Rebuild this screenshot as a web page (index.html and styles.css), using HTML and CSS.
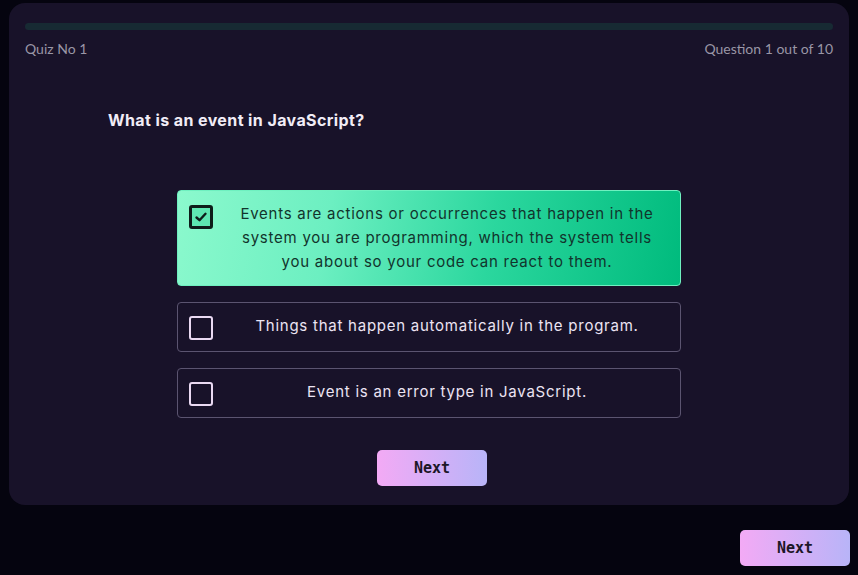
FILE: index.html
```html
<!DOCTYPE html>
<html lang="en">
<head>
<meta charset="utf-8">
<title>Quiz</title>
<link rel="stylesheet" href="styles.css">
</head>
<body>
<div class="page">
  <main class="card">
    <div class="progress"><div class="progress-fill"></div></div>
    <div class="meta">
      <span>Quiz No 1</span>
      <span>Question 1 out of 10</span>
    </div>
    <h1 class="question">What is an event in JavaScript?</h1>
    <div class="options">
      <div class="option selected">
        <span class="checkbox">
          <svg viewBox="0 0 16 16" width="16" height="16"><path d="M3.5 8.5 L6.5 11.2 L12.5 4.8" fill="none" stroke="#0e1d1a" stroke-width="2.4" stroke-linecap="round" stroke-linejoin="round"/></svg>
        </span>
        <span class="option-text">Events are actions or occurrences that happen in the system you are programming, which the system tells you about so your code can react to them.</span>
      </div>
      <div class="option">
        <span class="checkbox"></span>
        <span class="option-text">Things that happen automatically in the program.</span>
      </div>
      <div class="option">
        <span class="checkbox"></span>
        <span class="option-text">Event is an error type in JavaScript.</span>
      </div>
    </div>
    <div class="actions">
      <button class="btn-next">Next</button>
    </div>
  </main>
  <div class="footer">
    <button class="btn-next">Next</button>
  </div>
</div>
</body>
</html>
```
FILE: styles.css
```css
html, body {
  margin: 0;
  padding: 0;
  background: #05040f;
  height: 100%;
}
.page {
  padding: 3px 8px 0 9px;
  font-family: Inter, "Noto Sans", sans-serif;
}
.card {
  width: 840px;
  box-sizing: border-box;
  background: #181229;
  border-radius: 16px;
  padding: 20px 16px 19px;
}
.progress {
  height: 7px;
  border-radius: 4px;
  background: #172a33;
}
.meta {
  display: flex;
  justify-content: space-between;
  margin-top: 10px;
  font-family: Lato, "Noto Sans", sans-serif;
  font-size: 14px;
  line-height: 18px;
  color: #9a96a6;
}
.question {
  margin: 52px 0 0 83px;
  font-size: 16px;
  line-height: 20px;
  font-weight: 700;
  letter-spacing: 0.4px;
  color: #f1ecf6;
}
.options {
  width: 504px;
  margin: 60px auto 0;
  display: flex;
  flex-direction: column;
  gap: 16px;
}
.option {
  display: flex;
  align-items: flex-start;
  gap: 12px;
  padding: 11px 11px;
  border: 1px solid #5b5470;
  border-radius: 4px;
  color: #ece4f3;
  font-size: 15px;
  line-height: 24px;
  letter-spacing: 0.75px;
}
.option.selected {
  border-color: #6ff0c0;
  background: linear-gradient(100deg, #8bf9cd 0%, #6cefc1 30%, #2bd79e 62%, #00bb7d 100%);
  color: #12342c;
}
.checkbox {
  flex: none;
  box-sizing: border-box;
  width: 24px;
  height: 24px;
  margin-top: 2px;
  border: 2px solid #ead9f2;
  border-radius: 3px;
  display: flex;
  align-items: center;
  justify-content: center;
}
.option.selected .checkbox {
  margin-top: 3px;
  border: 3px solid #0e1d1a;
  background: #5ee7b2;
}
.option-text {
  flex: 1;
  padding: 0 8px;
  text-align: center;
}
.actions {
  display: flex;
  justify-content: center;
  margin-top: 32px;
  padding-left: 6px;
}
.btn-next {
  width: 110px;
  height: 36px;
  border: none;
  border-radius: 5px;
  background: linear-gradient(90deg, #f3aaf5 0%, #b8b4f8 100%);
  font-family: "DejaVu Sans Mono", monospace;
  font-weight: 700;
  font-size: 15px;
  color: #1c1726;
  cursor: pointer;
}
.footer {
  display: flex;
  justify-content: flex-end;
  margin-top: 25px;
}
```
